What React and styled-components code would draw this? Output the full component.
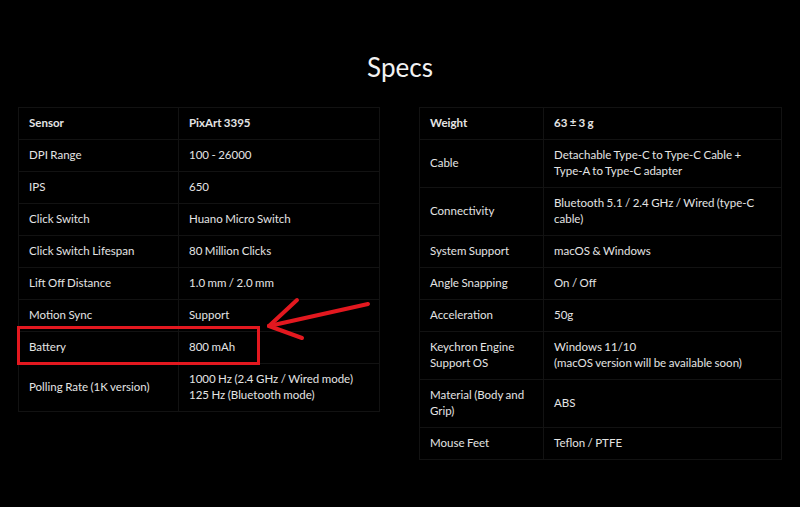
import React from 'react';
import styled, { createGlobalStyle } from 'styled-components';

const GlobalStyle = createGlobalStyle`
  html, body {
    margin: 0;
    padding: 0;
    background: #000;
  }
  body {
    font-family: Lato, "Open Sans", "Liberation Sans", sans-serif;
  }
`;

const Page = styled.div`
  position: relative;
  width: 800px;
  height: 507px;
  background: #000;
  color: #e6e6e6;
  padding: 53px 18px 0;
  box-sizing: border-box;
  overflow: hidden;
`;

const Title = styled.h2`
  margin: 0 0 26px;
  text-align: center;
  font-size: 26px;
  font-weight: 400;
  line-height: 28px;
  color: #f2f2f2;
`;

const Columns = styled.div`
  display: flex;
  justify-content: space-between;
  align-items: flex-start;
`;

const Table = styled.table`
  width: ${(p) => p.$width}px;
  border-collapse: collapse;
  table-layout: fixed;
  border: 1px solid #121212;
`;

const Row = styled.tr`
  border-bottom: 1px solid #121212;
`;

const Cell = styled.td`
  box-sizing: border-box;
  padding: 7px 10px 8px;
  font-size: 11.5px;
  line-height: 16px;
  word-spacing: -0.5px;
  vertical-align: middle;
  color: #e4e4e4;
  font-weight: ${(p) => (p.$bold ? 700 : 400)};
  border-right: 1px solid #121212;
  width: ${(p) => (p.$width ? `${p.$width}px` : 'auto')};
`;

const Overlay = styled.svg`
  position: absolute;
  left: 0;
  top: 0;
  pointer-events: none;
`;

const leftSpecs = [
  ['Sensor', 'PixArt 3395'],
  ['DPI Range', '100 - 26000'],
  ['IPS', '650'],
  ['Click Switch', 'Huano Micro Switch'],
  ['Click Switch Lifespan', '80 Million Clicks'],
  ['Lift Off Distance', '1.0 mm / 2.0 mm'],
  ['Motion Sync', 'Support'],
  ['Battery', '800 mAh'],
  ['Polling Rate (1K version)', ['1000 Hz (2.4 GHz / Wired mode)', '125 Hz (Bluetooth mode)']],
];

const rightSpecs = [
  ['Weight', '63 ± 3 g'],
  ['Cable', 'Detachable Type-C to Type-C Cable + Type-A to Type-C adapter'],
  ['Connectivity', 'Bluetooth 5.1 / 2.4 GHz / Wired (type-C cable)'],
  ['System Support', 'macOS & Windows'],
  ['Angle Snapping', 'On / Off'],
  ['Acceleration', '50g'],
  ['Keychron Engine Support OS', ['Windows 11/10', '(macOS version will be available soon)']],
  ['Material (Body and Grip)', 'ABS'],
  ['Mouse Feet', 'Teflon / PTFE'],
];

const renderValue = (value) =>
  Array.isArray(value)
    ? value.map((line, i) => (
        <React.Fragment key={i}>
          {i > 0 && <br />}
          {line}
        </React.Fragment>
      ))
    : value;

const SpecTable = ({ specs, width, labelWidth }) => (
  <Table $width={width}>
    <tbody>
      {specs.map(([label, value], i) => (
        <Row key={label}>
          <Cell $bold={i === 0} $width={labelWidth}>{label}</Cell>
          <Cell $bold={i === 0}>{renderValue(value)}</Cell>
        </Row>
      ))}
    </tbody>
  </Table>
);

const App = () => (
  <Page>
    <GlobalStyle />
    <Title>Specs</Title>
    <Columns>
      <SpecTable specs={leftSpecs} width={362} labelWidth={160} />
      <SpecTable specs={rightSpecs} width={363} labelWidth={124} />
    </Columns>
    <Overlay width="800" height="507" viewBox="0 0 800 507">
      <rect x="18.5" y="327.5" width="240" height="36" fill="none" stroke="#e3181f" strokeWidth="3" />
      <g stroke="#e3181f" strokeWidth="4" strokeLinecap="round" fill="none">
        <line x1="269" y1="326" x2="368" y2="304" />
        <line x1="269" y1="326" x2="297" y2="300" />
        <line x1="269" y1="326" x2="302" y2="338" />
      </g>
    </Overlay>
  </Page>
);

export default App;
